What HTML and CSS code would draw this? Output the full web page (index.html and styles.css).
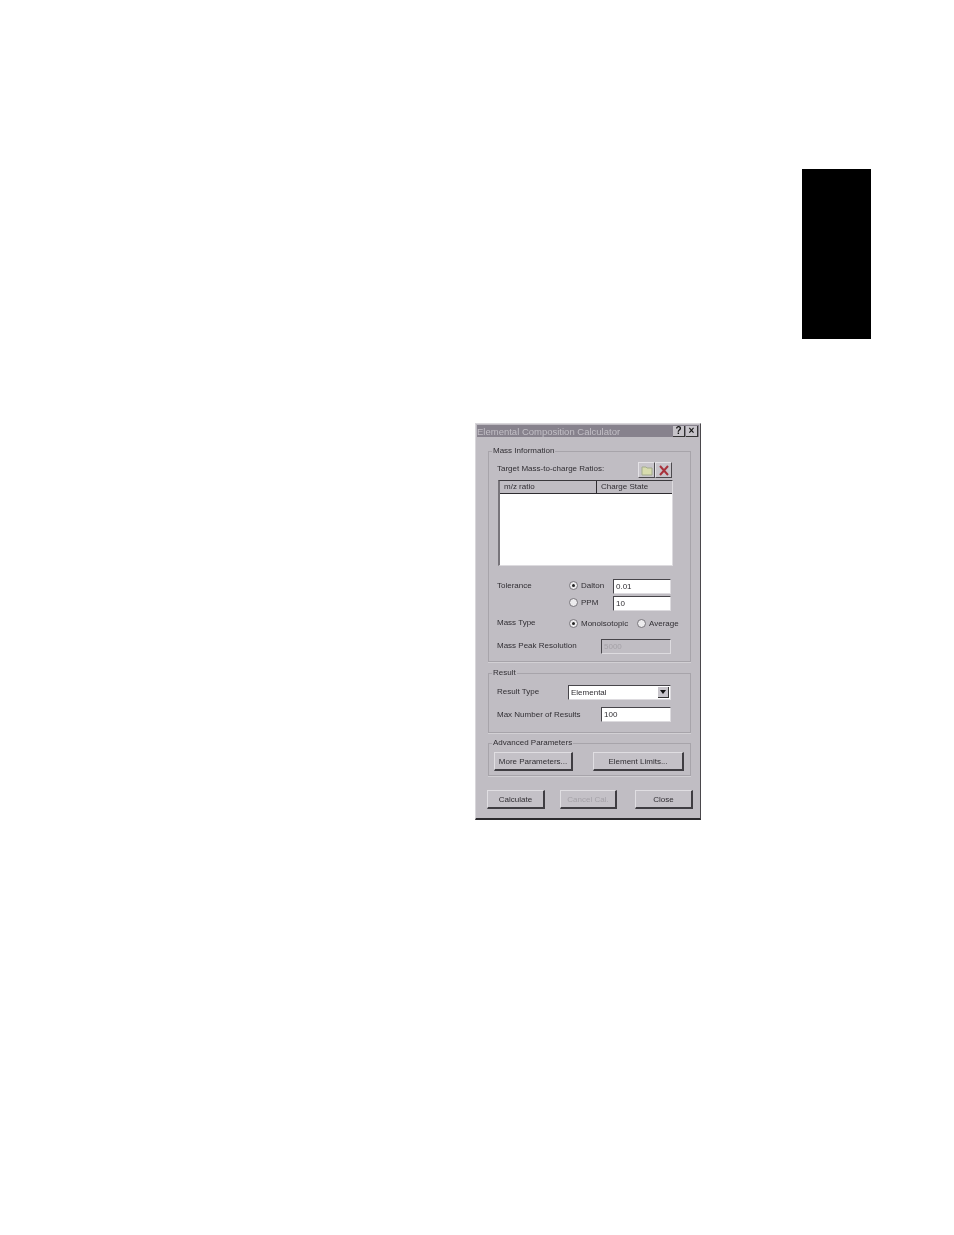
FILE: index.html
```html
<!DOCTYPE html>
<html>

<head>
    <meta name="viewport" content="width=device-width, initial-scale=1">
    <title>Elemental Composition Calculator</title>
    <link rel="stylesheet" href="styles.css">
</head>

<body>
    <div class="page">
        <div class="side-tab"></div>

        <div class="dialog">
            <div class="title-bar">
                <span class="title-text">Elemental Composition Calculator</span>
                <span class="title-btn">?</span>
                <span class="title-btn">&#215;</span>
            </div>

            <fieldset class="group group-mass">
                <legend>Mass Information</legend>
                <div class="target-row">
                    <span class="up">Target Mass-to-charge Ratios:</span>
                    <span class="tool-btns">
                        <span class="tool-btn">
                            <svg width="12" height="11" viewBox="0 0 12 11">
                                <path d="M1 2h4l1 1h5v7H1z" fill="#d8dcae" stroke="#a3ab8c" stroke-width="1" />
                            </svg>
                        </span>
                        <span class="tool-btn">
                            <svg width="12" height="11" viewBox="0 0 12 11">
                                <path d="M2 1l8 9M10 1l-8 9" stroke="#a8323c" stroke-width="2" fill="none" />
                            </svg>
                        </span>
                    </span>
                </div>
                <div class="list-box">
                    <div class="list-head">
                        <span class="col-ratio">m/z ratio</span>
                        <span class="col-charge">Charge State</span>
                    </div>
                </div>

                <div class="form-row row-dalton">
                    <span class="label-col up">Tolerance</span>
                    <span class="radio checked up-small"></span>
                    <span class="radio-text text-dalton up-small">Dalton</span>
                    <span class="field field-short">0.01</span>
                </div>
                <div class="form-row row-ppm">
                    <span class="label-col"></span>
                    <span class="radio up-small"></span>
                    <span class="radio-text text-dalton up-small">PPM</span>
                    <span class="field field-short">10</span>
                </div>
                <div class="form-row row-type">
                    <span class="label-col up">Mass Type</span>
                    <span class="radio checked"></span>
                    <span class="radio-text text-mono">Monoisotopic</span>
                    <span class="radio"></span>
                    <span class="radio-text">Average</span>
                </div>
                <div class="form-row row-peak">
                    <span class="label-wide up">Mass Peak Resolution</span>
                    <span class="field field-wide field-off">5000</span>
                </div>
            </fieldset>

            <fieldset class="group group-result">
                <legend>Result</legend>
                <div class="form-row row-result">
                    <span class="label-result up-small">Result Type</span>
                    <span class="field field-select">
                        Elemental
                        <span class="drop-btn"></span>
                    </span>
                </div>
                <div class="form-row row-max">
                    <span class="label-wide">Max Number of Results</span>
                    <span class="field field-wide">100</span>
                </div>
            </fieldset>

            <fieldset class="group group-advanced">
                <legend>Advanced Parameters</legend>
                <div class="advanced-row">
                    <span class="btn btn-more">More Parameters...</span>
                    <span class="btn btn-limits">Element Limits...</span>
                </div>
            </fieldset>

            <div class="bottom-row">
                <span class="btn btn-calc">Calculate</span>
                <span class="btn btn-cancel">Cancel Cal.</span>
                <span class="btn btn-close">Close</span>
            </div>
        </div>
    </div>
</body>

</html>
```

FILE: styles.css
```css
body {
    margin: 0;
    background-color: #fff;
    font-family: "Liberation Sans", Arial, sans-serif;
}

.page {
    height: 1235px;
    padding-top: 169px;
    box-sizing: border-box;
    overflow: hidden;
}

.side-tab {
    width: 69px;
    height: 170px;
    margin-left: 802px;
    background-color: #000;
}

.dialog {
    width: 226px;
    height: 397px;
    margin: 84px 0 0 475px;
    padding: 1px 1px 0 1px;
    box-sizing: border-box;
    background-color: #c0bdc3;
    border-right: 1px solid #4a484c;
    border-bottom: 2px solid #2c2b2e;
    border-top: 1px solid #d8d6da;
    border-left: 1px solid #d8d6da;
    font-size: 8px;
    color: #302e33;
    filter: blur(0.6px);
}

.title-bar {
    display: flex;
    align-items: center;
    height: 12px;
    padding-right: 1px;
    gap: 1px;
    background-color: #87828d;
}

.title-text {
    flex: 1;
    color: #c2bfc6;
    font-size: 9.5px;
    white-space: nowrap;
}

.title-btn {
    width: 12px;
    height: 11px;
    background-color: #c6c3c9;
    border-right: 1px solid #333;
    border-bottom: 1px solid #333;
    box-sizing: border-box;
    color: #111;
    font-size: 10px;
    font-weight: bold;
    line-height: 10px;
    text-align: center;
}

.group {
    margin: 0 0 0 11px;
    width: 203px;
    padding: 0 0 0 8px;
    box-sizing: border-box;
    border: 1px solid #a7a4aa;
    box-shadow: 0 1px 0 #d2d0d4;
}

.group legend {
    padding: 0 1px;
    margin-left: -5px;
    line-height: 10px;
}

.group-mass {
    height: 216px;
    margin-top: 9px;
}

.group-result {
    height: 65px;
    margin-top: 6px;
}

.group-advanced {
    height: 38px;
    margin-top: 5px;
}

.up {
    margin-bottom: 3px;
}

.up-small {
    margin-bottom: 2px;
}

.target-row {
    display: flex;
    align-items: center;
    justify-content: space-between;
    width: 175px;
    height: 16px;
    margin-top: 6px;
}

.tool-btns {
    display: flex;
}

.tool-btn {
    display: flex;
    align-items: center;
    justify-content: center;
    width: 17px;
    height: 16px;
    box-sizing: border-box;
    background-color: #c8c5cb;
    border-right: 1px solid #4c4a4e;
    border-bottom: 1px solid #4c4a4e;
    border-top: 1px solid #e4e2e6;
    border-left: 1px solid #e4e2e6;
}

.list-box {
    width: 175px;
    height: 86px;
    margin: 2px 0 0 1px;
    box-sizing: border-box;
    background-color: #fff;
    border-top: 1px solid #3a383c;
    border-left: 2px solid #77747a;
    border-bottom: 1px solid #dddbdf;
    border-right: 1px solid #dddbdf;
}

.list-head {
    display: flex;
    height: 12px;
    background-color: #c0bdc3;
    border-bottom: 1px solid #2e2c30;
    line-height: 12px;
}

.col-ratio {
    width: 97px;
    padding-left: 4px;
    box-sizing: border-box;
    border-right: 1px solid #2e2c30;
}

.col-charge {
    padding-left: 4px;
}

.form-row {
    display: flex;
    align-items: center;
    height: 15px;
}

.row-dalton {
    margin-top: 13px;
}

.row-ppm {
    margin-top: 2px;
}

.row-type {
    margin-top: 5px;
}

.row-peak {
    margin-top: 8px;
}

.row-result {
    margin-top: 7px;
}

.row-max {
    margin-top: 7px;
}

.label-col {
    width: 72px;
}

.label-wide {
    width: 104px;
    white-space: nowrap;
}

.label-result {
    width: 71px;
}

.radio {
    position: relative;
    width: 9px;
    height: 9px;
    margin-right: 3px;
    flex-shrink: 0;
    box-sizing: border-box;
    border-radius: 50%;
    background-color: #ecebed;
    border: 1px solid #77747a;
}

.radio.checked::after {
    content: "";
    position: absolute;
    left: 2px;
    top: 2px;
    width: 3px;
    height: 3px;
    border-radius: 50%;
    background-color: #222;
}

.radio-text {
    white-space: nowrap;
}

.text-dalton {
    width: 32px;
}

.text-mono {
    width: 56px;
}

.field {
    display: flex;
    align-items: center;
    height: 15px;
    padding-left: 2px;
    box-sizing: border-box;
    background-color: #fff;
    border-top: 1px solid #47454a;
    border-left: 1px solid #47454a;
    border-right: 1px solid #dddbdf;
    border-bottom: 1px solid #dddbdf;
}

.field-short {
    width: 58px;
}

.field-wide {
    width: 70px;
}

.field-off {
    background-color: #c0bdc3;
    color: #a5a2a8;
}

.field-select {
    width: 103px;
    justify-content: space-between;
}

.drop-btn {
    position: relative;
    width: 11px;
    height: 11px;
    margin-right: 1px;
    box-sizing: border-box;
    background-color: #c8c5cb;
    border-right: 1px solid #333;
    border-bottom: 1px solid #333;
}

.drop-btn::after {
    content: "";
    position: absolute;
    left: 2px;
    top: 3px;
    border-left: 3px solid transparent;
    border-right: 3px solid transparent;
    border-top: 4px solid #111;
}

.btn {
    display: flex;
    align-items: center;
    justify-content: center;
    height: 19px;
    box-sizing: border-box;
    background-color: #c4c1c7;
    border-top: 1px solid #e0dee2;
    border-left: 1px solid #e0dee2;
    border-right: 2px solid #3f3d42;
    border-bottom: 2px solid #3f3d42;
    white-space: nowrap;
}

.advanced-row {
    display: flex;
    margin-left: -3px;
    padding-top: 4px;
}

.btn-more {
    width: 79px;
    margin-right: 20px;
}

.btn-limits {
    width: 91px;
}

.bottom-row {
    display: flex;
    margin: 14px 0 0 10px;
}

.btn-calc {
    width: 58px;
    margin-right: 15px;
}

.btn-cancel {
    width: 57px;
    margin-right: 18px;
    color: #a5a2a8;
}

.btn-close {
    width: 58px;
}
```
